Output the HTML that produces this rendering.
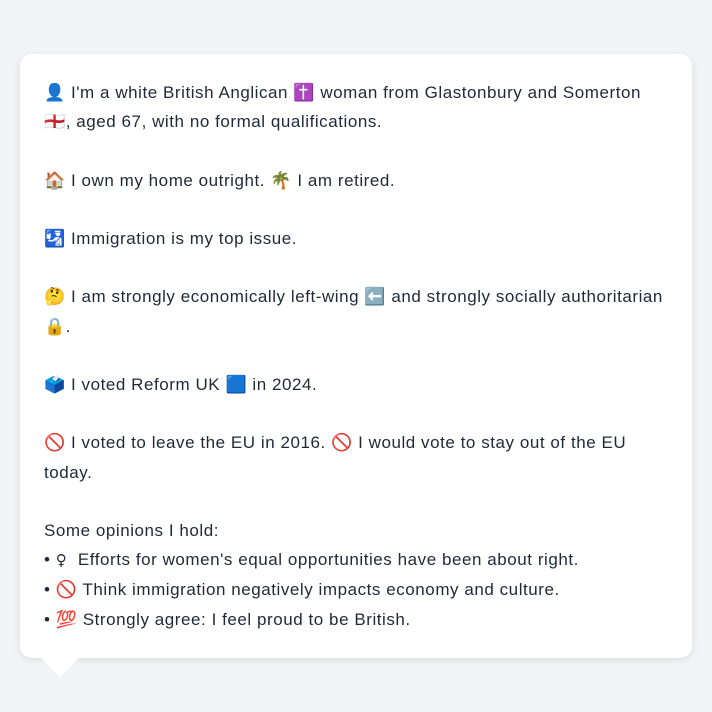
<!DOCTYPE html>
<html><head><meta charset="utf-8"><style>
html,body{margin:0;padding:0;background:#f3f4f6;width:712px;height:712px;overflow:hidden}
.card{position:absolute;left:20px;top:54px;width:672px;height:604px;background:#fff;border-radius:12px;box-shadow:0 2px 8px rgba(0,0,0,0.10);box-sizing:border-box;padding:24px 10px 0 24px;font-family:"Liberation Sans","Noto Color Emoji",sans-serif;font-size:17px;line-height:29.2px;color:#1f2937;letter-spacing:0.55px;white-space:nowrap}
.tail{position:absolute;left:40px;top:657px;width:0;height:0;border-left:20px solid transparent;border-right:20px solid transparent;border-top:20px solid #fff}
p{margin:0 0 29.2px 0}
.t{font-family:"DejaVu Sans",sans-serif;font-size:15px}
</style></head><body>
<div class="card">
<p>👤 I'm a white British Anglican ✝️ woman from Glastonbury and Somerton<br>🏴󠁧󠁢󠁥󠁮󠁧󠁿, aged 67, with no formal qualifications.</p>
<p>🏠 I own my home outright. 🌴 I am retired.</p>
<p>🛂 Immigration is my top issue.</p>
<p>🤔 I am strongly economically left-wing ⬅️ and strongly socially authoritarian<br>🔒.</p>
<p>🗳️ I voted Reform UK 🟦 in 2024.</p>
<p>🚫 I voted to leave the EU in 2016. 🚫 I would vote to stay out of the EU<br>today.</p>
<div>Some opinions I hold:<br>• <span class="t">♀</span>&#xFE0E;&nbsp; Efforts for women's equal opportunities have been about right.<br>• 🚫 Think immigration negatively impacts economy and culture.<br>• 💯 Strongly agree: I feel proud to be British.</div>
</div>
<div class="tail"></div>
</body></html>
